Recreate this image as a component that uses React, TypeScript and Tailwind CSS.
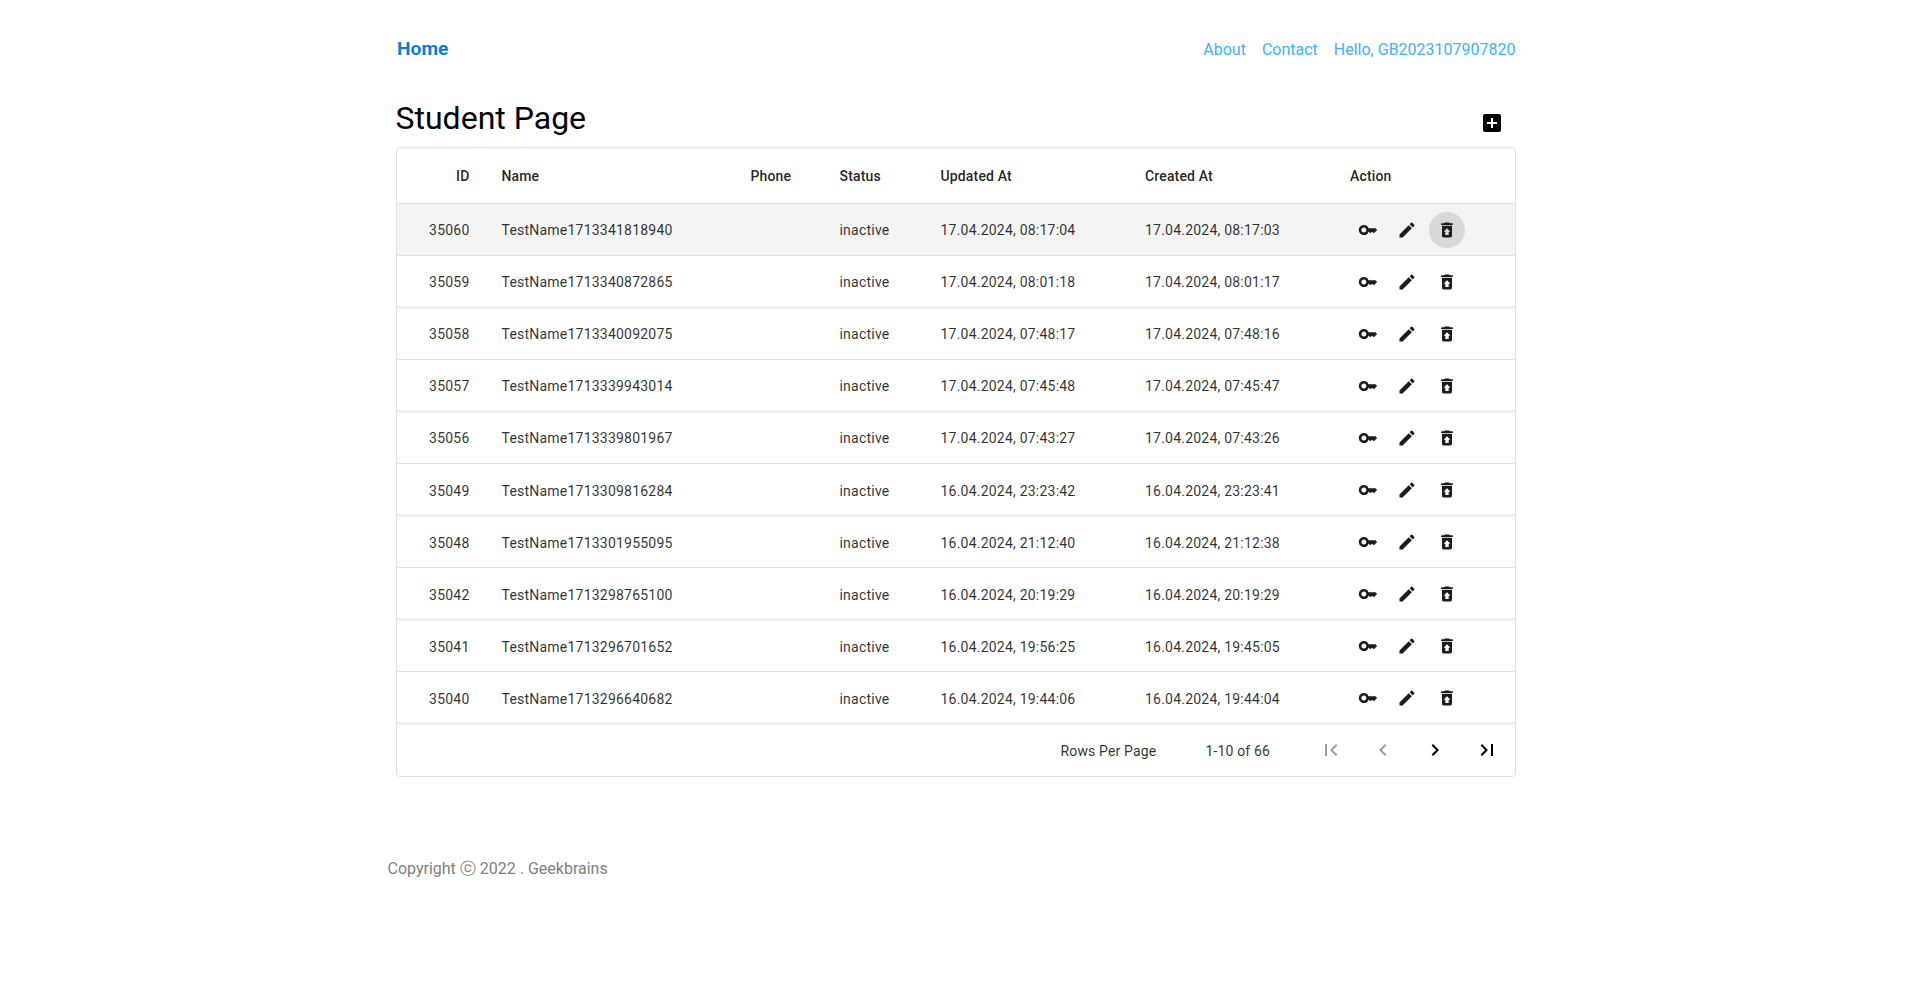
import { MdAddBox, MdChevronLeft, MdChevronRight, MdEdit, MdFirstPage, MdKey, MdLastPage, MdRestoreFromTrash } from 'react-icons/md'

const STUDENTS = [
  { id: 35060, name: 'TestName1713341818940', updated: '17.04.2024, 08:17:04', created: '17.04.2024, 08:17:03' },
  { id: 35059, name: 'TestName1713340872865', updated: '17.04.2024, 08:01:18', created: '17.04.2024, 08:01:17' },
  { id: 35058, name: 'TestName1713340092075', updated: '17.04.2024, 07:48:17', created: '17.04.2024, 07:48:16' },
  { id: 35057, name: 'TestName1713339943014', updated: '17.04.2024, 07:45:48', created: '17.04.2024, 07:45:47' },
  { id: 35056, name: 'TestName1713339801967', updated: '17.04.2024, 07:43:27', created: '17.04.2024, 07:43:26' },
  { id: 35049, name: 'TestName1713309816284', updated: '16.04.2024, 23:23:42', created: '16.04.2024, 23:23:41' },
  { id: 35048, name: 'TestName1713301955095', updated: '16.04.2024, 21:12:40', created: '16.04.2024, 21:12:38' },
  { id: 35042, name: 'TestName1713298765100', updated: '16.04.2024, 20:19:29', created: '16.04.2024, 20:19:29' },
  { id: 35041, name: 'TestName1713296701652', updated: '16.04.2024, 19:56:25', created: '16.04.2024, 19:45:05' },
  { id: 35040, name: 'TestName1713296640682', updated: '16.04.2024, 19:44:06', created: '16.04.2024, 19:44:04' },
]

const head = 'px-4 pt-[2px] border-b border-[#e0e0e0] text-left font-medium'
const cell = 'px-4 pt-[2px] border-b border-[#e0e0e0] text-left'

function StudentRow({ student, active }: { student: (typeof STUDENTS)[number]; active: boolean }) {
  return (
    <tr className={active ? 'h-[52.1px] bg-[#f4f4f4]' : 'h-[52.1px]'}>
      <td className={`${cell} text-right!`}>{student.id}</td>
      <td className={cell}>{student.name}</td>
      <td className={cell}></td>
      <td className={cell}>inactive</td>
      <td className={cell}>{student.updated}</td>
      <td className={cell}>{student.created}</td>
      <td className="border-b border-[#e0e0e0] pt-px pl-[15.5px]">
        <div className="flex gap-[3.7px] text-[#1c1c1c]">
          <button className="flex h-9 w-9 items-center justify-center rounded-full">
            <MdKey size={20} />
          </button>
          <button className="flex h-9 w-9 items-center justify-center rounded-full">
            <MdEdit size={20} />
          </button>
          <button className={active ? 'flex h-9 w-9 items-center justify-center rounded-full bg-[#d8d8d8]' : 'flex h-9 w-9 items-center justify-center rounded-full'}>
            <MdRestoreFromTrash size={20} />
          </button>
        </div>
      </td>
    </tr>
  )
}

export default function App() {
  return (
    <div className="mx-auto w-[1136px] font-['Roboto',sans-serif]">
      <div className="px-2">
        {/* Top nav */}
        <nav className="flex h-[96px] items-center justify-between pl-[1.5px]">
          <a className="pt-[2px] text-[19.2px] font-bold text-[#0a7ed6]">Home</a>
          <div className="flex gap-4 pt-1 text-base text-[#3db2ff]">
            <a>About</a>
            <a>Contact</a>
            <a>Hello, GB2023107907820</a>
          </div>
        </nav>

        <div className="flex h-[51px] items-start justify-between">
          <h1 className="text-[32px] leading-[44px] text-black">Student Page</h1>
          <button className="mt-[7px] mr-[4px] flex h-10 w-10 items-center justify-center text-black">
            <MdAddBox size={24} />
          </button>
        </div>

        {/* Table card */}
        <div className="rounded border border-[#e0e0e0] text-sm text-black/[0.87]">
          <table className="w-full table-fixed border-collapse">
            <colgroup>
              <col className="w-[89px]" />
              <col className="w-[249px]" />
              <col className="w-[89px]" />
              <col className="w-[101px]" />
              <col className="w-[204.5px]" />
              <col className="w-[205px]" />
              <col />
            </colgroup>
            <thead className="tracking-[0.15px]">
              <tr className="h-[55px]">
                <th className={`${head} text-right!`}>ID</th>
                <th className={head}>Name</th>
                <th className={head}>Phone</th>
                <th className={head}>Status</th>
                <th className={head}>Updated At</th>
                <th className={head}>Created At</th>
                <th className={head}>Action</th>
              </tr>
            </thead>
            <tbody className="tracking-[0.22px] text-black/[0.82]">
              {STUDENTS.map((s, i) => (
                <StudentRow key={s.id} student={s} active={i === 0} />
              ))}
            </tbody>
          </table>
          {/* Pagination */}
          <div className="flex h-[52px] items-center pl-[664px] tracking-[0.15px] text-black/[0.82]">
            <span className="mt-[2px] w-[145px]">Rows Per Page</span>
            <span className="mt-[2px] w-[105px]">1-10 of 66</span>
            <div className="flex gap-3">
              <button className="flex h-10 w-10 items-center justify-center text-black/[0.38]"><MdFirstPage size={24} /></button>
              <button className="flex h-10 w-10 items-center justify-center text-black/[0.38]"><MdChevronLeft size={24} /></button>
              <button className="flex h-10 w-10 items-center justify-center text-black"><MdChevronRight size={24} /></button>
              <button className="flex h-10 w-10 items-center justify-center text-black"><MdLastPage size={24} /></button>
            </div>
          </div>
        </div>
      </div>

      <footer className="mt-[80px] text-base text-[#808080]">Copyright ⓒ 2022 . Geekbrains</footer>
    </div>
  )
}
